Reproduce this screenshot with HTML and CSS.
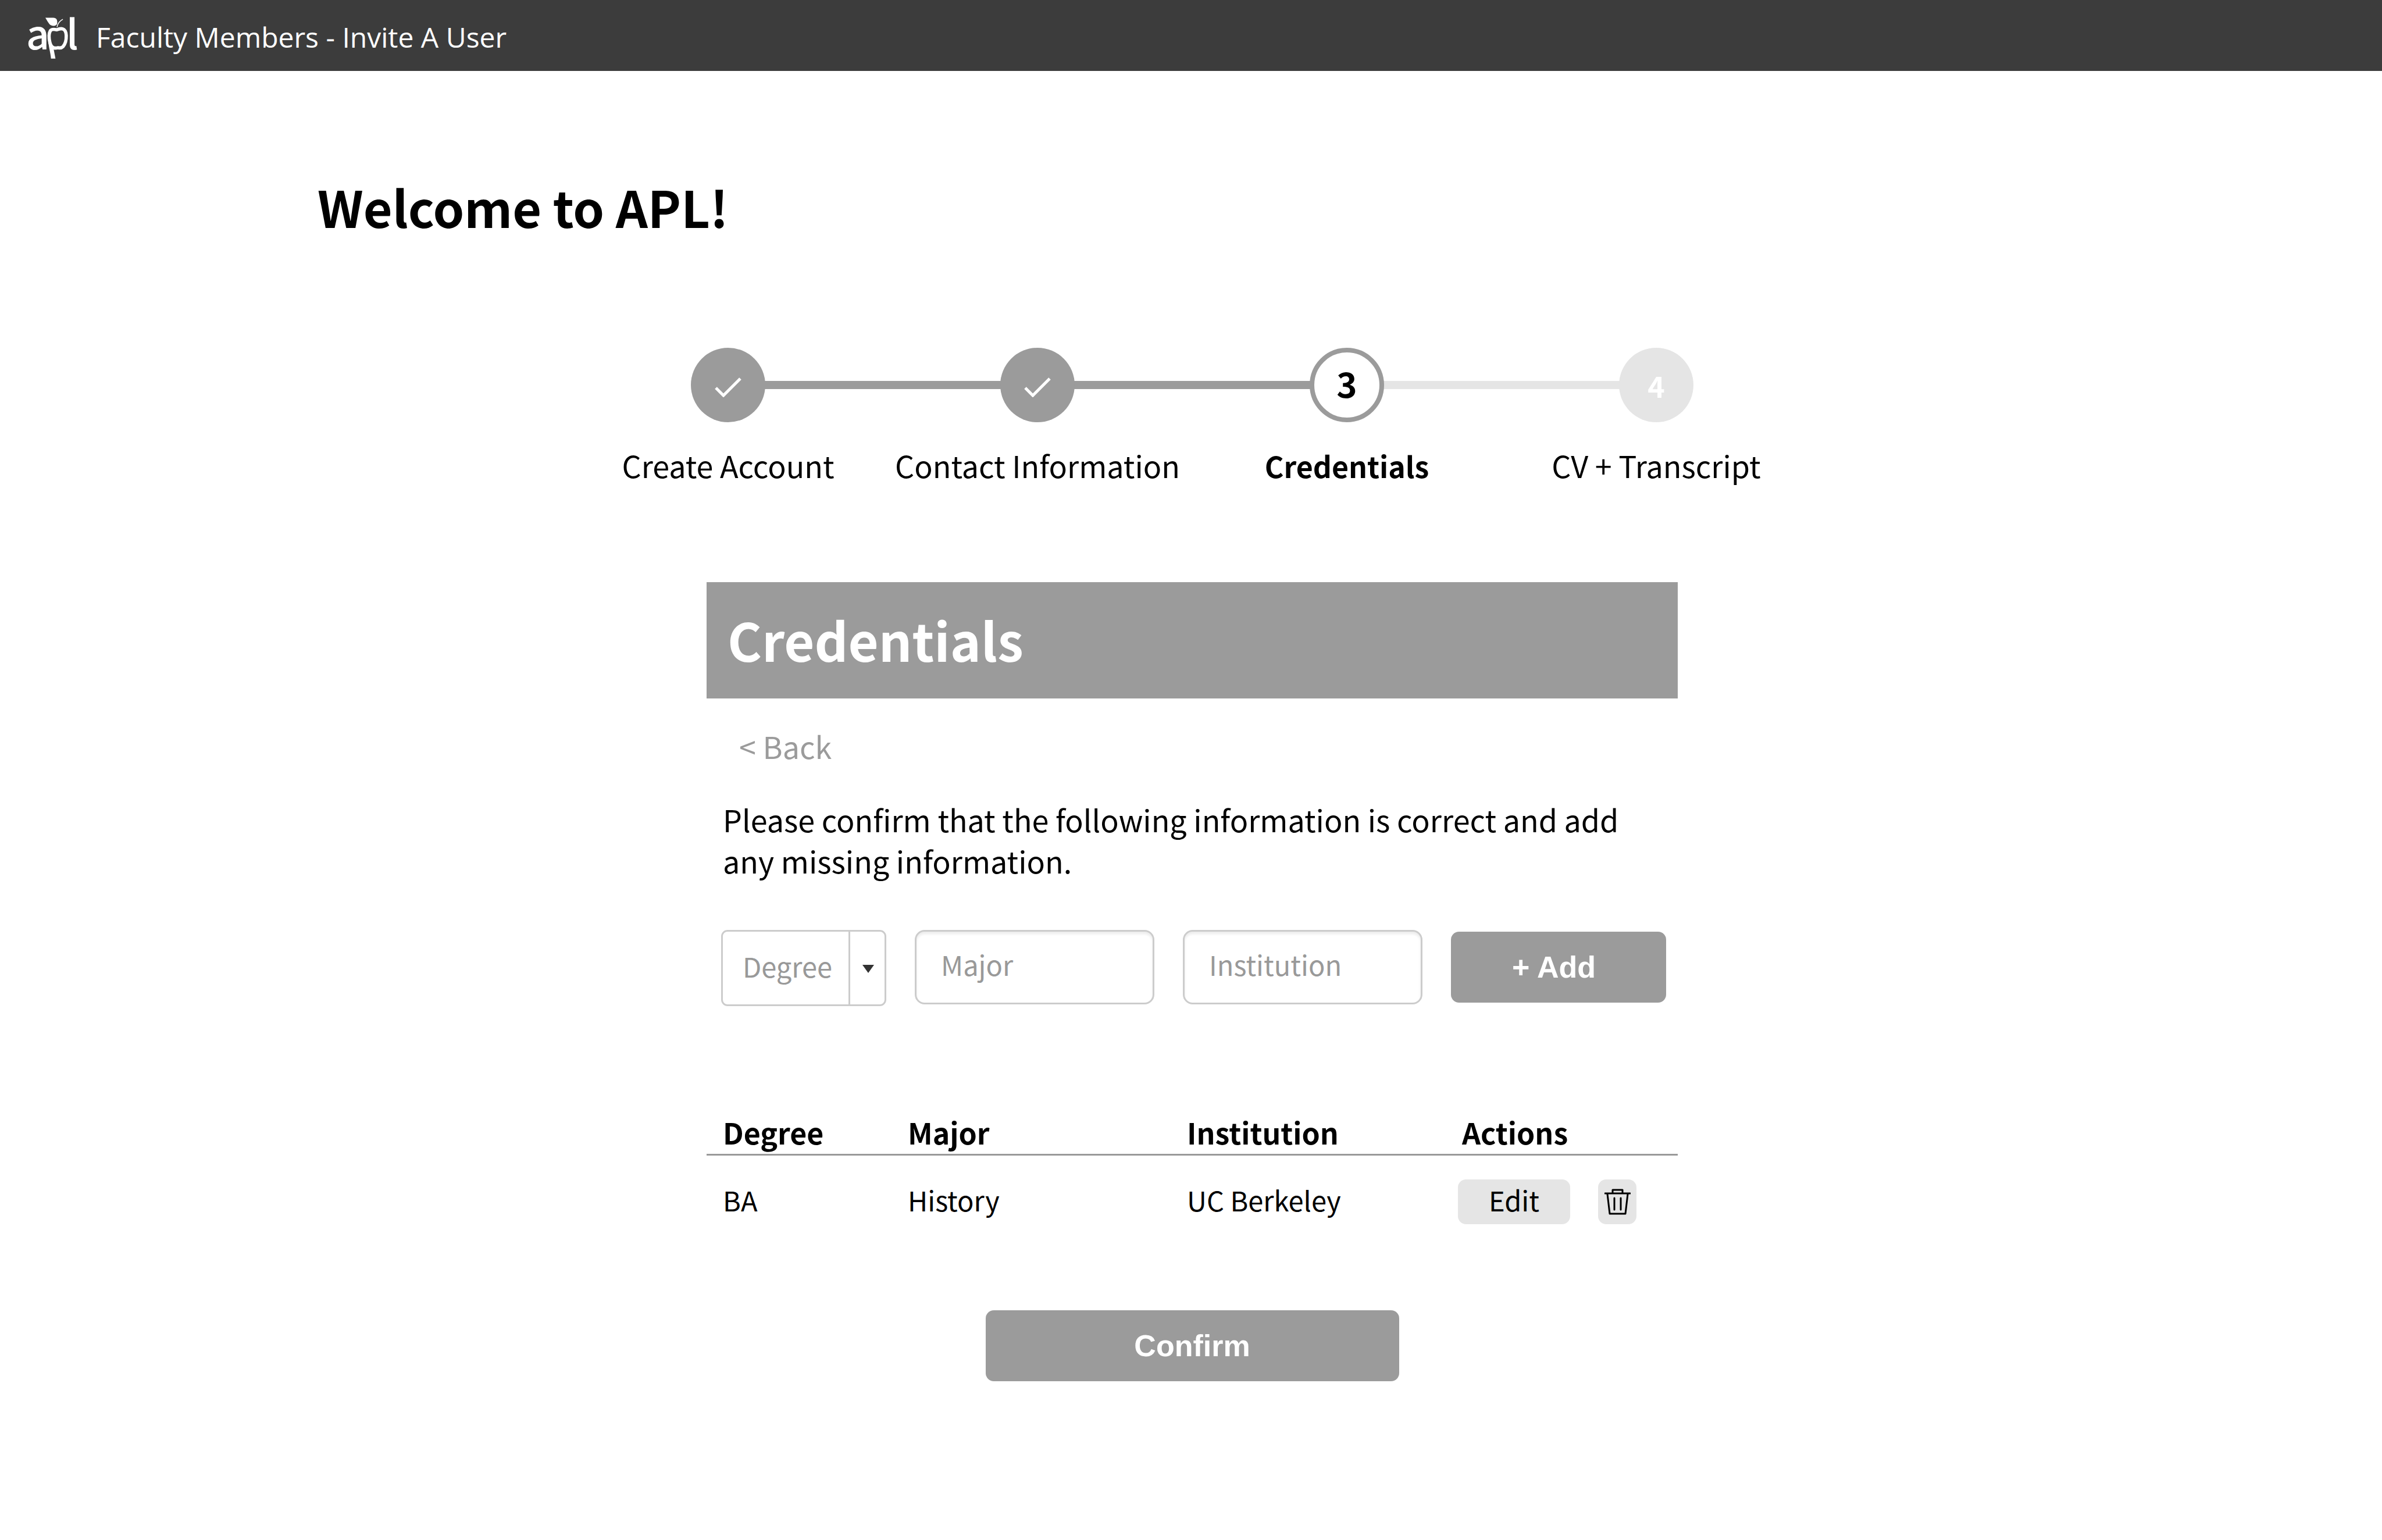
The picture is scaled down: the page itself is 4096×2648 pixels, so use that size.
FILE: index.html
```html
<!DOCTYPE html>
<html lang="en">
<head>
<meta charset="utf-8">
<meta name="viewport" content="width=device-width, initial-scale=1">
<title>Faculty Members - Invite A User</title>
<link rel="stylesheet" href="styles.css">
</head>
<body>
<header class="topbar">
  <svg class="logo" viewBox="90 72 366 314" role="img" aria-label="apl">
    <text class="logo-letter" x="76" y="317">a</text>
    <text class="logo-letter" x="381" y="317">l</text>
    <path fill="none" stroke="currentColor" stroke-width="25" stroke-linejoin="round" d="M309 166C290 161 268 160 259 175C245 200 251 240 257 265C263 285 270 298 285 302C300 308 305 306 318 302C334 306 346 304 356 294C372 277 382 245 381 210C380 185 372 165 353 159C338 155 325 159 309 166Z"/>
    <path fill="currentColor" d="M241 215L270 290L284 306L299 385H265C262 340 244 290 241 215Z"/>
    <path fill="currentColor" d="M222 74H282C306 74 315 90 312 118C306 136 286 140 266 132C248 124 236 94 222 74Z"/>
    <path fill="none" stroke="currentColor" stroke-width="7" d="M311 145C315 118 333 98 355 86"/>
  </svg>
  <span class="topbar-title">Faculty Members - Invite A User</span>
</header>

<main class="page">
  <h1 class="welcome">Welcome to APL!</h1>

  <ol class="stepper">
    <li class="step step-done">
      <span class="step-mark"><svg class="check" viewBox="0 0 46 34" aria-label="Done"><path d="M2 18L15 31L44 2"/></svg></span>
      <span class="step-label">Create Account</span>
    </li>
    <li class="step step-done">
      <span class="step-mark"><svg class="check" viewBox="0 0 46 34" aria-label="Done"><path d="M2 18L15 31L44 2"/></svg></span>
      <span class="step-label">Contact Information</span>
    </li>
    <li class="step step-current" aria-current="step">
      <span class="step-mark">3</span>
      <span class="step-label">Credentials</span>
    </li>
    <li class="step step-next">
      <span class="step-mark">4</span>
      <span class="step-label">CV + Transcript</span>
    </li>
  </ol>

  <section class="card">
    <h2 class="card-title">Credentials</h2>
    <a class="back" href="#contact">&lt; Back</a>
    <p class="intro">Please confirm that the following information is correct and add any missing information.</p>

    <form class="add-form">
      <div class="select-box">
        <select class="field select" aria-label="Degree">
          <option>Degree</option>
          <option>BA</option>
          <option>MA</option>
        </select>
        <span class="select-arrow"><svg viewBox="0 0 20 14" width="20" height="14"><path d="M0 0H20L10 14Z"/></svg></span>
      </div>
      <input class="field text-field" type="text" placeholder="Major" aria-label="Major">
      <input class="field text-field" type="text" placeholder="Institution" aria-label="Institution">
      <button class="button add-button" type="button">+ Add</button>
    </form>

    <table class="records">
      <thead>
        <tr>
          <th class="col-degree" scope="col">Degree</th>
          <th class="col-major" scope="col">Major</th>
          <th class="col-institution" scope="col">Institution</th>
          <th class="col-actions" scope="col">Actions</th>
        </tr>
      </thead>
      <tbody>
        <tr>
          <td class="col-degree">BA</td>
          <td>History</td>
          <td>UC Berkeley</td>
          <td>
            <div class="row-actions">
              <button class="small-button edit-button" type="button">Edit</button>
              <button class="small-button delete-button" type="button" aria-label="Delete">
                <svg class="trash" viewBox="0 0 45 45"><path d="M1 8H44M14 8V2H31V8M5 9L9 43H36L40 9M17 16V36M28 16V36"/></svg>
              </button>
            </div>
          </td>
        </tr>
      </tbody>
    </table>

    <button class="button confirm-button" type="button">Confirm</button>
  </section>
</main>
</body>
</html>
```
FILE: styles.css
```css
* {
  box-sizing: border-box;
}

body {
  margin: 0;
  background: #fff;
  color: #000;
  font-family: "Noto Sans CJK SC", "Noto Sans", sans-serif;
  font-size: 52px;
  line-height: 60px;
}

button,
input,
select {
  font-family: inherit;
  margin: 0;
}

.topbar {
  display: flex;
  align-items: center;
  gap: 34px;
  height: 122px;
  padding: 8px 48px 0;
  background: #3c3c3c;
  color: #fff;
  font-family: "Open Sans", sans-serif;
  font-size: 48px;
}

.logo {
  width: 83px;
  height: 71px;
  overflow: visible;
}

.logo-letter {
  font-family: "Noto Sans CJK SC", sans-serif;
  font-size: 308px;
  font-weight: 500;
  fill: currentColor;
}

.topbar-title {
  padding-bottom: 2px;
}

.page {
  padding: 183px 0 100px 4px;
}

.welcome {
  margin: 0 0 193px;
  padding: 0 542px;
  font-size: 86px;
  line-height: 100px;
  font-weight: 700;
}

.stepper {
  display: grid;
  grid-template-columns: repeat(4, 1fr);
  width: 2128px;
  max-width: 100%;
  margin: 0 auto 171px;
  padding: 0;
  list-style: none;
}

.step {
  position: relative;
  display: flex;
  flex-direction: column;
  align-items: center;
  gap: 44px;
}

.step + .step::before {
  content: "";
  position: absolute;
  top: 57px;
  right: 50%;
  width: 100%;
  height: 14px;
  background: #9b9b9b;
}

.step.step-next::before {
  background: #e5e5e5;
}

.step-mark {
  z-index: 1;
  display: flex;
  align-items: center;
  justify-content: center;
  width: 128px;
  height: 128px;
  border-radius: 50%;
  background: #9b9b9b;
}

.step-current .step-mark {
  padding-bottom: 8px;
  border: 8px solid #9b9b9b;
  background: #fff;
  font-size: 60px;
  font-weight: 700;
}

.step-current .step-label {
  font-size: 50px;
  font-weight: 700;
}

.step-next .step-mark {
  background: #e5e5e5;
  color: #fff;
  font-size: 50px;
  font-weight: 700;
}

.step-label {
  white-space: nowrap;
}

.check {
  width: 46px;
  height: 34px;
  margin-top: 8px;
  fill: none;
  stroke: #fff;
  stroke-width: 5;
}

.card {
  width: 1670px;
  max-width: 100%;
  margin: 0 auto;
}

.card-title {
  margin: 0 0 52px;
  padding: 48px 36px 52px;
  background: #9b9b9b;
  color: #fff;
  font-size: 90px;
  line-height: 100px;
  font-weight: 700;
}

.back {
  display: block;
  width: max-content;
  margin: 0 0 60px 56px;
  color: #9b9b9b;
  text-decoration: none;
}

.intro {
  margin: 0 0 84px;
  padding: 0 28px;
  line-height: 71px;
}

.add-form {
  display: grid;
  grid-template-columns: 284fr 412fr 412fr 370fr;
  gap: 49px;
  align-items: start;
  margin-bottom: 186px;
  padding: 0 20px 0 25px;
}

.field {
  width: 100%;
  border: 3px solid #ccc;
  background: #fff;
  color: #999;
  font-size: 47px;
}

.select-box {
  position: relative;
}

.select {
  display: block;
  height: 131px;
  padding: 0 64px 8px 34px;
  border-radius: 11px;
  appearance: none;
}

.select-arrow {
  position: absolute;
  top: 3px;
  right: 0;
  bottom: 0;
  display: flex;
  align-items: center;
  justify-content: center;
  width: 65px;
  border-left: 3px solid #ccc;
  fill: #333;
  pointer-events: none;
}

.text-field {
  height: 128px;
  padding: 0 42px 12px;
  border-radius: 17px;
  box-shadow: inset 0 4px 4px #ececec;
}

.text-field::placeholder {
  color: #999;
  opacity: 1;
}

.button {
  height: 122px;
  border: 0;
  border-radius: 14px;
  background: #9b9b9b;
  color: #fff;
  font-family: "Liberation Sans", Arial, sans-serif;
  font-size: 52px;
  font-weight: 700;
}

.add-button {
  margin-top: 3px;
  padding: 0 16px 0 0;
}

.confirm-button {
  display: block;
  width: 711px;
  margin: 148px auto 0;
  padding: 0;
}

.records {
  width: 100%;
  border-collapse: collapse;
  table-layout: fixed;
}

.records th {
  padding: 0 0 8px;
  border-bottom: 3px solid #999;
  text-align: left;
  font-size: 50px;
  font-weight: 700;
}

.records td {
  padding: 41px 0 0;
  vertical-align: baseline;
  font-size: 47px;
}

.records .col-degree {
  width: 346px;
  padding-left: 28px;
}

.col-major {
  width: 480px;
}

.col-institution {
  width: 466px;
}

.records .col-actions {
  padding-left: 7px;
}

.row-actions {
  display: flex;
  align-items: baseline;
  gap: 48px;
}

.small-button {
  height: 77px;
  padding: 0;
  border: 0;
  border-radius: 14px;
  background: #e5e5e5;
  color: #000;
}

.edit-button {
  width: 193px;
  padding-bottom: 8px;
  font-size: 47px;
}

.delete-button {
  display: flex;
  align-items: center;
  align-self: flex-start;
  justify-content: center;
  width: 66px;
}

.trash {
  width: 45px;
  height: 45px;
  fill: none;
  stroke: #000;
  stroke-width: 3;
  stroke-linecap: round;
  stroke-linejoin: round;
}
```
